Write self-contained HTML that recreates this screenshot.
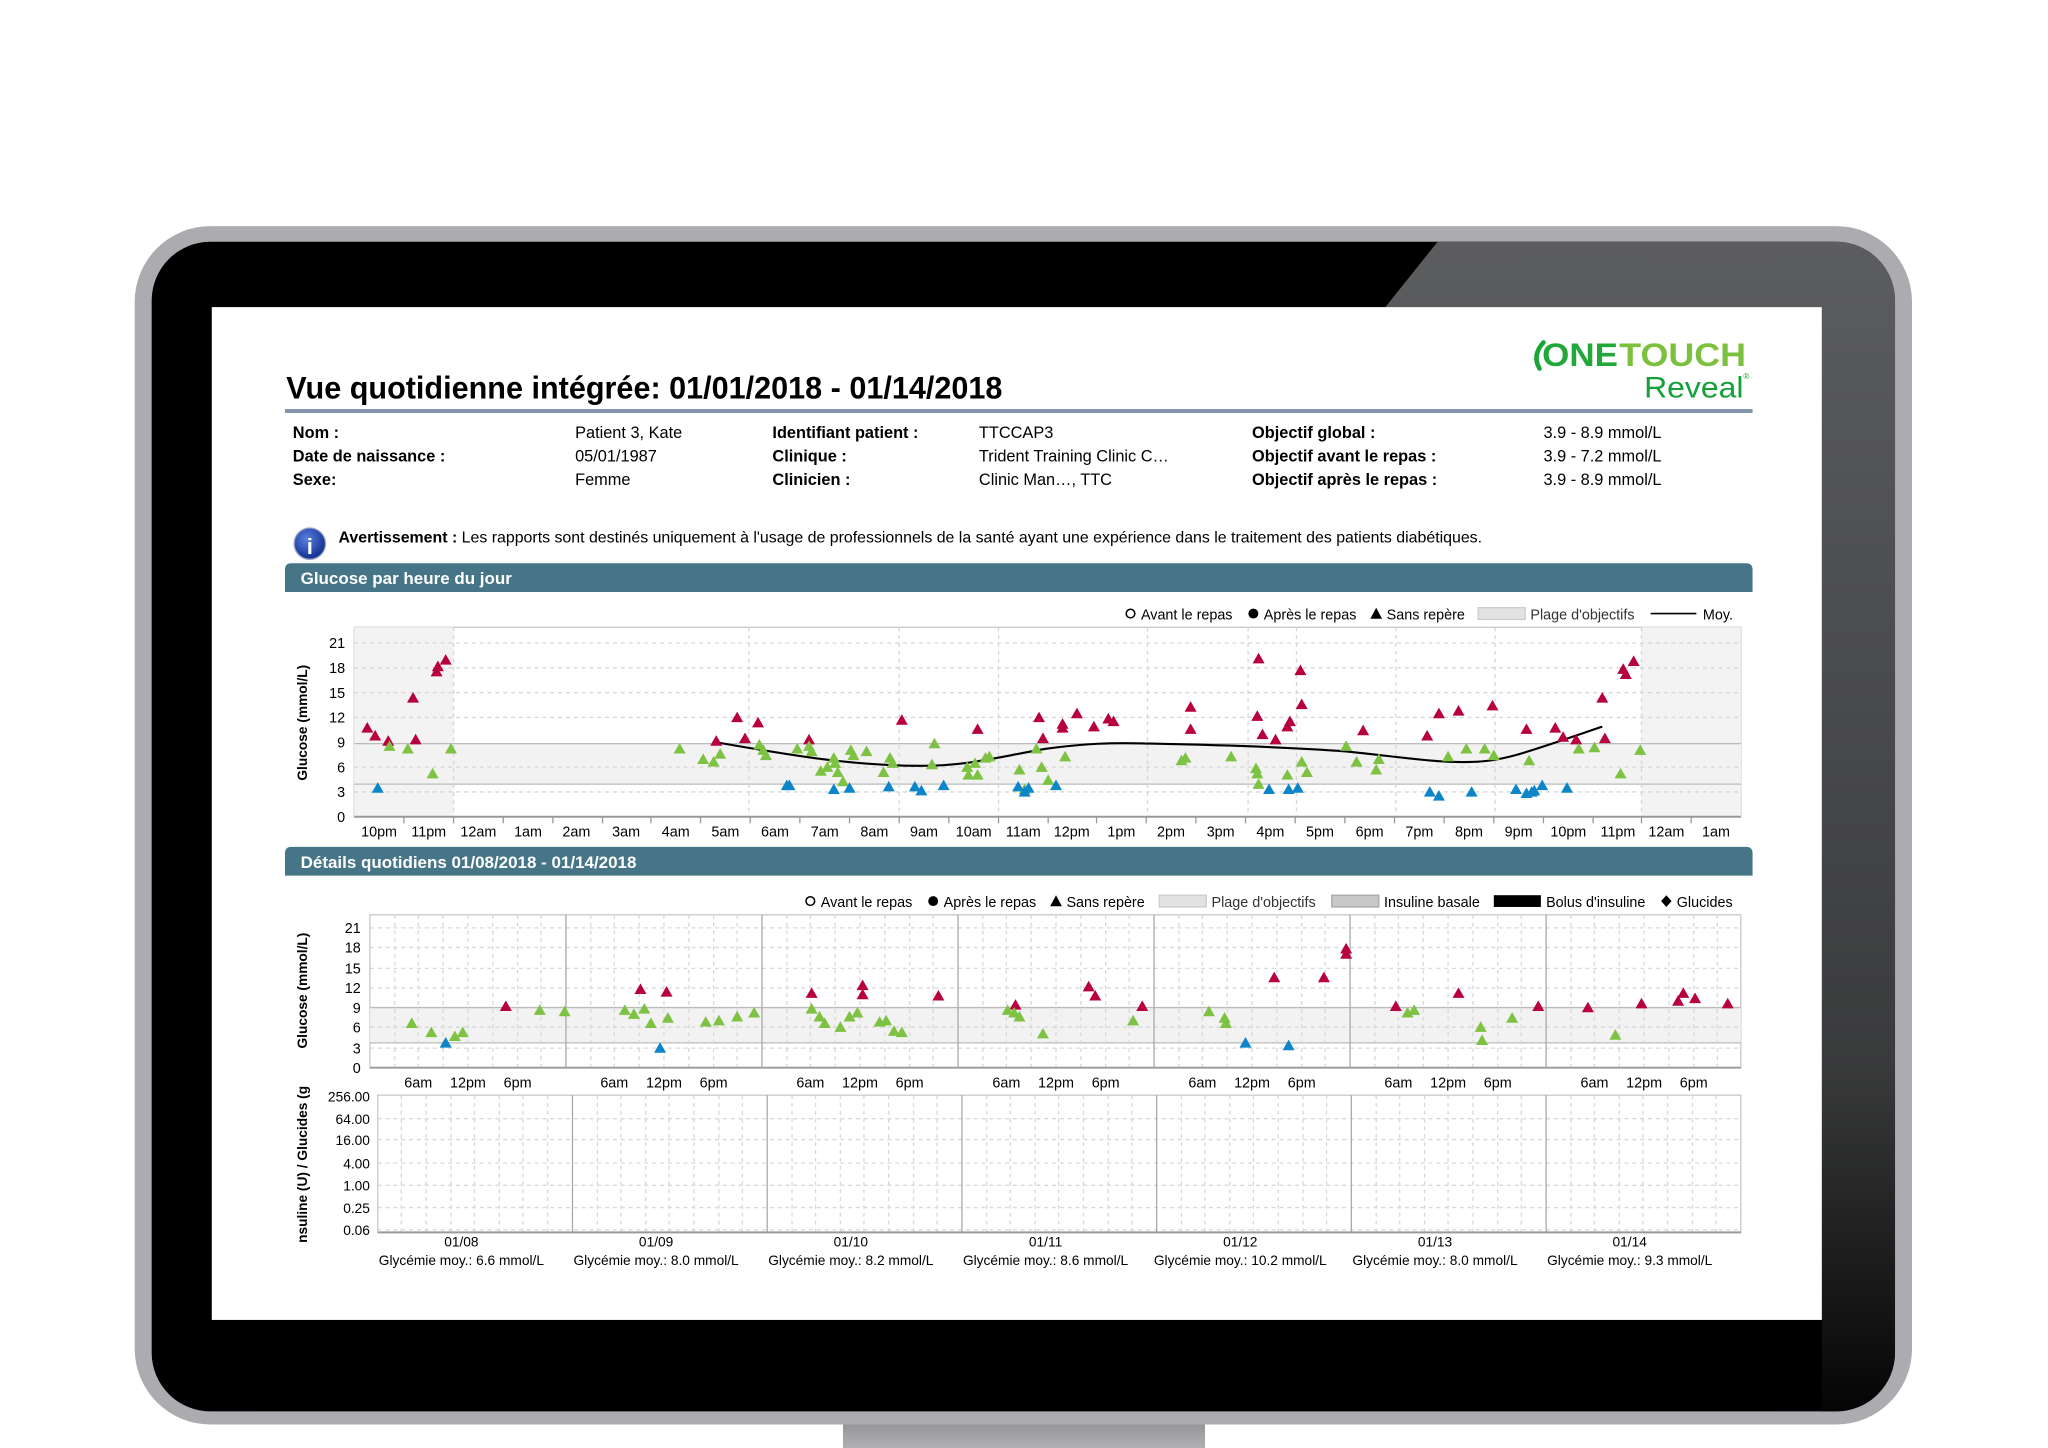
<!DOCTYPE html>
<html><head><meta charset="utf-8"><style>
html,body{margin:0;padding:0;background:#fff;width:2048px;height:1448px;overflow:hidden}
svg{display:block}
text{font-family:"Liberation Sans",Arial,sans-serif}
</style></head><body>
<svg width="2048" height="1448" viewBox="0 0 1567 1108" xmlns="http://www.w3.org/2000/svg">
<defs>
<linearGradient id="gl" x1="0" y1="0" x2="0" y2="1"><stop offset="0" stop-color="#5c5d5f"/><stop offset="0.7" stop-color="#3a3b3c"/><stop offset="1" stop-color="#050505"/></linearGradient>
<linearGradient id="st" x1="0" y1="0" x2="0" y2="1"><stop offset="0" stop-color="#8e8e91"/><stop offset="1" stop-color="#b0b0b3"/></linearGradient>
<clipPath id="inner"><rect x="116" y="185" width="1334" height="895" rx="45"/></clipPath>
<path id="tr" d="M0,-4.5 L4.6,3.6 L-4.6,3.6 Z"/>
<radialGradient id="ig" cx="0.4" cy="0.35" r="0.7"><stop offset="0" stop-color="#5a7fe0"/><stop offset="1" stop-color="#0c2a8a"/></radialGradient>
</defs>
<rect x="645" y="1085" width="277" height="23" fill="url(#st)"/>
<rect x="103" y="173" width="1360" height="917" rx="58" fill="#acabb0"/>
<rect x="116" y="185" width="1334" height="895" rx="45" fill="#000"/>
<g clip-path="url(#inner)"><polygon points="1100,185 1460,185 1460,1080 1394,1080 1394,235 1060,235" fill="url(#gl)"/></g>
<rect x="162" y="235" width="1232" height="775" fill="#fff"/>

<text x="219" y="305" font-size="24" font-weight="bold" fill="#000" textLength="548" lengthAdjust="spacingAndGlyphs">Vue quotidienne intégrée: 01/01/2018 - 01/14/2018</text>
<path d="M1181,262 Q1172,272 1178,282" stroke="#1aa538" stroke-width="3.5" fill="none" stroke-linecap="round"/>
<text x="1180" y="280" font-size="25" font-weight="bold" fill="#22a83a" textLength="58" lengthAdjust="spacingAndGlyphs">ONE</text>
<text x="1239" y="280" font-size="25" font-weight="bold" fill="#7cc13e" textLength="97" lengthAdjust="spacingAndGlyphs">TOUCH</text>
<text x="1258" y="304" font-size="23" fill="#15a13a" textLength="76" lengthAdjust="spacingAndGlyphs">Reveal</text>
<text x="1334" y="290" font-size="6" fill="#15a13a">®</text>
<rect x="218" y="313" width="1123" height="3" fill="#8294a8"/>

<g font-size="12.5" fill="#000">
<text x="224" y="335" font-weight="bold">Nom :</text>
<text x="224" y="353" font-weight="bold">Date de naissance :</text>
<text x="224" y="371" font-weight="bold">Sexe:</text>
<text x="440" y="335">Patient 3, Kate</text>
<text x="440" y="353">05/01/1987</text>
<text x="440" y="371">Femme</text>
<text x="591" y="335" font-weight="bold">Identifiant patient :</text>
<text x="591" y="353" font-weight="bold">Clinique :</text>
<text x="591" y="371" font-weight="bold">Clinicien :</text>
<text x="749" y="335">TTCCAP3</text>
<text x="749" y="353">Trident Training Clinic C…</text>
<text x="749" y="371">Clinic Man…, TTC</text>
<text x="958" y="335" font-weight="bold">Objectif global :</text>
<text x="958" y="353" font-weight="bold">Objectif avant le repas :</text>
<text x="958" y="371" font-weight="bold">Objectif après le repas :</text>
<text x="1181" y="335">3.9 - 8.9 mmol/L</text>
<text x="1181" y="353">3.9 - 7.2 mmol/L</text>
<text x="1181" y="371">3.9 - 8.9 mmol/L</text>
</g>
<circle cx="237" cy="416" r="12" fill="url(#ig)" stroke="#9aa3c4" stroke-width="1"/>
<text x="237" y="424" font-size="17" font-weight="bold" fill="#fff" text-anchor="middle" font-family="Liberation Serif">i</text>
<text x="259" y="415" font-size="12" fill="#000" textLength="875" lengthAdjust="spacingAndGlyphs"><tspan font-weight="bold">Avertissement :</tspan> Les rapports sont destinés uniquement à l'usage de professionnels de la santé ayant une expérience dans le traitement des patients diabétiques.</text>

<path d="M218,436 Q218,431 223,431 L1336,431 Q1341,431 1341,436 L1341,453 L218,453 Z" fill="#457587"/>
<text x="230" y="447" font-size="13" font-weight="bold" fill="#fff">Glucose par heure du jour</text>
<g font-size="11" fill="#000">
<circle cx="865" cy="469.5" r="3.3" fill="none" stroke="#000" stroke-width="1.2"/><text x="873" y="474">Avant le repas</text>
<circle cx="959" cy="469.5" r="3.8"/><text x="967" y="474">Après le repas</text>
<path d="M1053,465 L1057.5,473.5 L1048.5,473.5Z"/><text x="1061" y="474">Sans repère</text>
<rect x="1131" y="465" width="36" height="9" fill="#e2e2e2" stroke="#ccc"/><text x="1171" y="474" fill="#333">Plage d'objectifs</text>
<line x1="1263" y1="469.5" x2="1298" y2="469.5" stroke="#000" stroke-width="1.3"/><text x="1303" y="474">Moy.</text>
</g>
<rect x="271" y="480" width="1061" height="145" fill="#fff" stroke="#c8c8c8"/>
<rect x="271" y="480" width="76" height="145" fill="#f3f3f3"/>
<rect x="1256" y="480" width="76" height="145" fill="#f3f3f3"/>
<rect x="271" y="569" width="1061" height="31" fill="#f2f2f2"/>
<line x1="271" y1="569" x2="1332" y2="569" stroke="#bbb"/><line x1="271" y1="600" x2="1332" y2="600" stroke="#bbb"/>
<g stroke="#d6d6d6" stroke-dasharray="3,3">
<line x1="271" y1="492" x2="1332" y2="492"/><line x1="271" y1="511" x2="1332" y2="511"/><line x1="271" y1="530" x2="1332" y2="530"/><line x1="271" y1="549" x2="1332" y2="549"/><line x1="271" y1="587" x2="1332" y2="587"/><line x1="271" y1="606" x2="1332" y2="606"/>
<line x1="347" y1="480" x2="347" y2="625"/><line x1="573" y1="480" x2="573" y2="625"/><line x1="688" y1="480" x2="688" y2="625"/><line x1="764" y1="480" x2="764" y2="625"/><line x1="878" y1="480" x2="878" y2="625"/><line x1="955" y1="480" x2="955" y2="625"/><line x1="992" y1="480" x2="992" y2="625"/><line x1="1068" y1="480" x2="1068" y2="625"/><line x1="1144" y1="480" x2="1144" y2="625"/><line x1="1256" y1="480" x2="1256" y2="625"/>
</g>
<line x1="271" y1="625" x2="1332" y2="625" stroke="#999" stroke-width="1.5"/>
<g font-size="11" fill="#000" text-anchor="end">
<text x="264" y="496">21</text><text x="264" y="515">18</text><text x="264" y="534">15</text><text x="264" y="553">12</text><text x="264" y="572">9</text><text x="264" y="591">6</text><text x="264" y="610">3</text><text x="264" y="629">0</text>
</g>
<text transform="translate(235,553) rotate(-90)" font-size="10.5" font-weight="bold" text-anchor="middle">Glucose (mmol/L)</text>
<g font-size="11" fill="#000" text-anchor="middle">
<text x="290" y="640">10pm</text><text x="328" y="640">11pm</text><text x="366" y="640">12am</text><text x="404" y="640">1am</text><text x="441" y="640">2am</text><text x="479" y="640">3am</text><text x="517" y="640">4am</text><text x="555" y="640">5am</text><text x="593" y="640">6am</text><text x="631" y="640">7am</text><text x="669" y="640">8am</text><text x="707" y="640">9am</text><text x="745" y="640">10am</text><text x="783" y="640">11am</text><text x="820" y="640">12pm</text><text x="858" y="640">1pm</text><text x="896" y="640">2pm</text><text x="934" y="640">3pm</text><text x="972" y="640">4pm</text><text x="1010" y="640">5pm</text><text x="1048" y="640">6pm</text><text x="1086" y="640">7pm</text><text x="1124" y="640">8pm</text><text x="1162" y="640">9pm</text><text x="1200" y="640">10pm</text><text x="1238" y="640">11pm</text><text x="1275" y="640">12am</text><text x="1313" y="640">1am</text>
</g>
<g stroke="#999">
<line x1="309" y1="625" x2="309" y2="630"/><line x1="347" y1="625" x2="347" y2="630"/><line x1="385" y1="625" x2="385" y2="630"/><line x1="423" y1="625" x2="423" y2="630"/><line x1="461" y1="625" x2="461" y2="630"/><line x1="498" y1="625" x2="498" y2="630"/><line x1="536" y1="625" x2="536" y2="630"/><line x1="574" y1="625" x2="574" y2="630"/><line x1="612" y1="625" x2="612" y2="630"/><line x1="650" y1="625" x2="650" y2="630"/><line x1="688" y1="625" x2="688" y2="630"/><line x1="726" y1="625" x2="726" y2="630"/><line x1="764" y1="625" x2="764" y2="630"/><line x1="802" y1="625" x2="802" y2="630"/><line x1="839" y1="625" x2="839" y2="630"/><line x1="877" y1="625" x2="877" y2="630"/><line x1="915" y1="625" x2="915" y2="630"/><line x1="953" y1="625" x2="953" y2="630"/><line x1="991" y1="625" x2="991" y2="630"/><line x1="1029" y1="625" x2="1029" y2="630"/><line x1="1067" y1="625" x2="1067" y2="630"/><line x1="1105" y1="625" x2="1105" y2="630"/><line x1="1143" y1="625" x2="1143" y2="630"/><line x1="1181" y1="625" x2="1181" y2="630"/><line x1="1219" y1="625" x2="1219" y2="630"/><line x1="1256" y1="625" x2="1256" y2="630"/><line x1="1294" y1="625" x2="1294" y2="630"/>
</g>
<path d="M548,568 C600,577 650,586 705,586 C740,586 760,580 800,573 C830,569 850,568 880,569 C930,570 990,572 1030,575 C1070,579 1100,584 1125,583 C1150,583 1170,575 1226,556" fill="none" stroke="#000" stroke-width="1.6"/>
<g fill="#b8003f">
<use href="#tr" x="281" y="557"/><use href="#tr" x="287" y="563"/><use href="#tr" x="297" y="567"/><use href="#tr" x="318" y="566"/><use href="#tr" x="316" y="534"/><use href="#tr" x="334" y="514"/><use href="#tr" x="335" y="510"/><use href="#tr" x="341" y="505"/><use href="#tr" x="548" y="567"/><use href="#tr" x="564" y="549"/><use href="#tr" x="570" y="565"/><use href="#tr" x="580" y="553"/><use href="#tr" x="619" y="566"/><use href="#tr" x="690" y="551"/><use href="#tr" x="748" y="558"/><use href="#tr" x="795" y="549"/><use href="#tr" x="798" y="565"/><use href="#tr" x="813" y="554"/><use href="#tr" x="813" y="557"/><use href="#tr" x="824" y="546"/><use href="#tr" x="837" y="556"/><use href="#tr" x="848" y="550"/><use href="#tr" x="852" y="552"/><use href="#tr" x="911" y="541"/><use href="#tr" x="911" y="558"/><use href="#tr" x="963" y="504"/><use href="#tr" x="962" y="548"/><use href="#tr" x="966" y="562"/><use href="#tr" x="976" y="566"/><use href="#tr" x="985" y="556"/><use href="#tr" x="987" y="552"/><use href="#tr" x="995" y="513"/><use href="#tr" x="996" y="539"/><use href="#tr" x="1043" y="559"/><use href="#tr" x="1092" y="563"/><use href="#tr" x="1101" y="546"/><use href="#tr" x="1116" y="544"/><use href="#tr" x="1142" y="540"/><use href="#tr" x="1168" y="558"/><use href="#tr" x="1190" y="557"/><use href="#tr" x="1196" y="564"/><use href="#tr" x="1206" y="566"/><use href="#tr" x="1228" y="565"/><use href="#tr" x="1226" y="534"/><use href="#tr" x="1242" y="512"/><use href="#tr" x="1244" y="516"/><use href="#tr" x="1250" y="506"/>
</g>
<g fill="#7dc242">
<use href="#tr" x="298" y="571"/><use href="#tr" x="312" y="573"/><use href="#tr" x="331" y="592"/><use href="#tr" x="345" y="573"/><use href="#tr" x="520" y="573"/><use href="#tr" x="538" y="581"/><use href="#tr" x="546" y="583"/><use href="#tr" x="551" y="577"/><use href="#tr" x="581" y="570"/><use href="#tr" x="584" y="574"/><use href="#tr" x="586" y="578"/><use href="#tr" x="610" y="573"/><use href="#tr" x="619" y="571"/><use href="#tr" x="621" y="575"/><use href="#tr" x="628" y="590"/><use href="#tr" x="633" y="587"/><use href="#tr" x="638" y="580"/><use href="#tr" x="639" y="584"/><use href="#tr" x="641" y="591"/><use href="#tr" x="645" y="598"/><use href="#tr" x="651" y="574"/><use href="#tr" x="653" y="578"/><use href="#tr" x="663" y="575"/><use href="#tr" x="676" y="591"/><use href="#tr" x="681" y="580"/><use href="#tr" x="683" y="584"/><use href="#tr" x="713" y="585"/><use href="#tr" x="715" y="569"/><use href="#tr" x="740" y="587"/><use href="#tr" x="741" y="593"/><use href="#tr" x="746" y="584"/><use href="#tr" x="748" y="593"/><use href="#tr" x="754" y="580"/><use href="#tr" x="757" y="579"/><use href="#tr" x="780" y="589"/><use href="#tr" x="784" y="604"/><use href="#tr" x="793" y="573"/><use href="#tr" x="797" y="587"/><use href="#tr" x="802" y="597"/><use href="#tr" x="815" y="579"/><use href="#tr" x="904" y="582"/><use href="#tr" x="907" y="580"/><use href="#tr" x="942" y="579"/><use href="#tr" x="961" y="588"/><use href="#tr" x="962" y="592"/><use href="#tr" x="963" y="600"/><use href="#tr" x="985" y="593"/><use href="#tr" x="996" y="583"/><use href="#tr" x="1000" y="591"/><use href="#tr" x="1030" y="571"/><use href="#tr" x="1038" y="583"/><use href="#tr" x="1053" y="589"/><use href="#tr" x="1055" y="581"/><use href="#tr" x="1108" y="579"/><use href="#tr" x="1122" y="573"/><use href="#tr" x="1136" y="573"/><use href="#tr" x="1143" y="578"/><use href="#tr" x="1170" y="582"/><use href="#tr" x="1208" y="573"/><use href="#tr" x="1220" y="572"/><use href="#tr" x="1240" y="592"/><use href="#tr" x="1255" y="574"/>
</g>
<g fill="#0d86c9">
<use href="#tr" x="289" y="603"/><use href="#tr" x="602" y="601"/><use href="#tr" x="604" y="601"/><use href="#tr" x="638" y="604"/><use href="#tr" x="650" y="603"/><use href="#tr" x="680" y="602"/><use href="#tr" x="700" y="602"/><use href="#tr" x="705" y="605"/><use href="#tr" x="722" y="601"/><use href="#tr" x="779" y="602"/><use href="#tr" x="784" y="606"/><use href="#tr" x="787" y="603"/><use href="#tr" x="808" y="601"/><use href="#tr" x="971" y="604"/><use href="#tr" x="986" y="604"/><use href="#tr" x="993" y="603"/><use href="#tr" x="1094" y="606"/><use href="#tr" x="1101" y="609"/><use href="#tr" x="1126" y="606"/><use href="#tr" x="1160" y="604"/><use href="#tr" x="1168" y="607"/><use href="#tr" x="1172" y="606"/><use href="#tr" x="1174" y="605"/><use href="#tr" x="1180" y="601"/><use href="#tr" x="1199" y="603"/>
</g>

<path d="M218,653 Q218,648 223,648 L1336,648 Q1341,648 1341,653 L1341,670 L218,670 Z" fill="#457587"/>
<text x="230" y="664" font-size="13" font-weight="bold" fill="#fff">Détails quotidiens 01/08/2018 - 01/14/2018</text>
<g font-size="11" fill="#000">
<circle cx="620" cy="689.5" r="3.3" fill="none" stroke="#000" stroke-width="1.2"/><text x="628" y="694">Avant le repas</text>
<circle cx="714" cy="689.5" r="3.8"/><text x="722" y="694">Après le repas</text>
<path d="M808,685 L812.5,693.5 L803.5,693.5Z"/><text x="816" y="694">Sans repère</text>
<rect x="887" y="685" width="36" height="9" fill="#e2e2e2" stroke="#ccc"/><text x="927" y="694" fill="#333">Plage d'objectifs</text>
<rect x="1019" y="685" width="36" height="9" fill="#c8c8c8" stroke="#aaa"/><text x="1059" y="694">Insuline basale</text>
<rect x="1143" y="685" width="36" height="9" fill="#000"/><text x="1183" y="694">Bolus d'insuline</text>
<path d="M1275,685 L1279,689.5 L1275,694 L1271,689.5Z"/><text x="1283" y="694">Glucides</text>
</g>
<rect x="283" y="700" width="1049" height="117" fill="#fff" stroke="#c8c8c8"/>
<rect x="283" y="771" width="1049" height="27" fill="#f2f2f2"/>
<line x1="283" y1="771" x2="1332" y2="771" stroke="#bbb"/><line x1="283" y1="798" x2="1332" y2="798" stroke="#bbb"/>
<g stroke="#d8d8d8" stroke-dasharray="3,3">
<line x1="283" y1="710" x2="1332" y2="710"/><line x1="283" y1="725" x2="1332" y2="725"/><line x1="283" y1="741" x2="1332" y2="741"/><line x1="283" y1="756" x2="1332" y2="756"/><line x1="283" y1="786" x2="1332" y2="786"/><line x1="283" y1="802" x2="1332" y2="802"/>
<path d="M302,700V817M320,700V817M339,700V817M358,700V817M377,700V817M396,700V817M414,700V817M452,700V817M470,700V817M489,700V817M508,700V817M527,700V817M546,700V817M564,700V817M602,700V817M620,700V817M639,700V817M658,700V817M677,700V817M696,700V817M714,700V817M752,700V817M770,700V817M789,700V817M808,700V817M827,700V817M846,700V817M864,700V817M902,700V817M920,700V817M939,700V817M958,700V817M977,700V817M996,700V817M1014,700V817M1052,700V817M1070,700V817M1089,700V817M1108,700V817M1127,700V817M1146,700V817M1164,700V817M1202,700V817M1220,700V817M1239,700V817M1258,700V817M1277,700V817M1296,700V817M1314,700V817"/>
</g>
<g stroke="#aaa"><path d="M433,700V817M583,700V817M733,700V817M883,700V817M1033,700V817M1183,700V817"/></g>
<line x1="283" y1="817" x2="1332" y2="817" stroke="#999" stroke-width="1.5"/>
<g font-size="11" fill="#000" text-anchor="end">
<text x="276" y="714">21</text><text x="276" y="729">18</text><text x="276" y="745">15</text><text x="276" y="760">12</text><text x="276" y="775">9</text><text x="276" y="790">6</text><text x="276" y="806">3</text><text x="276" y="821">0</text>
</g>
<text transform="translate(235,758) rotate(-90)" font-size="10.5" font-weight="bold" text-anchor="middle">Glucose (mmol/L)</text>
<g font-size="11" fill="#000" text-anchor="middle">
<text x="320" y="832">6am</text><text x="358" y="832">12pm</text><text x="396" y="832">6pm</text>
<text x="470" y="832">6am</text><text x="508" y="832">12pm</text><text x="546" y="832">6pm</text>
<text x="620" y="832">6am</text><text x="658" y="832">12pm</text><text x="696" y="832">6pm</text>
<text x="770" y="832">6am</text><text x="808" y="832">12pm</text><text x="846" y="832">6pm</text>
<text x="920" y="832">6am</text><text x="958" y="832">12pm</text><text x="996" y="832">6pm</text>
<text x="1070" y="832">6am</text><text x="1108" y="832">12pm</text><text x="1146" y="832">6pm</text>
<text x="1220" y="832">6am</text><text x="1258" y="832">12pm</text><text x="1296" y="832">6pm</text>
</g>
<g fill="#b8003f">
<use href="#tr" x="387" y="770"/><use href="#tr" x="490" y="757"/><use href="#tr" x="510" y="759"/><use href="#tr" x="621" y="760"/><use href="#tr" x="660" y="754"/><use href="#tr" x="660" y="761"/><use href="#tr" x="718" y="762"/><use href="#tr" x="777" y="769"/><use href="#tr" x="833" y="755"/><use href="#tr" x="838" y="762"/><use href="#tr" x="874" y="770"/><use href="#tr" x="975" y="748"/><use href="#tr" x="1013" y="748"/><use href="#tr" x="1030" y="726"/><use href="#tr" x="1030" y="730"/><use href="#tr" x="1068" y="770"/><use href="#tr" x="1116" y="760"/><use href="#tr" x="1177" y="770"/><use href="#tr" x="1215" y="771"/><use href="#tr" x="1256" y="768"/><use href="#tr" x="1284" y="766"/><use href="#tr" x="1288" y="760"/><use href="#tr" x="1297" y="764"/><use href="#tr" x="1322" y="768"/>
</g>
<g fill="#7dc242">
<use href="#tr" x="315" y="783"/><use href="#tr" x="330" y="790"/><use href="#tr" x="348" y="793"/><use href="#tr" x="354" y="790"/><use href="#tr" x="413" y="773"/><use href="#tr" x="432" y="774"/><use href="#tr" x="478" y="773"/><use href="#tr" x="485" y="776"/><use href="#tr" x="493" y="772"/><use href="#tr" x="498" y="783"/><use href="#tr" x="511" y="779"/><use href="#tr" x="540" y="782"/><use href="#tr" x="550" y="781"/><use href="#tr" x="564" y="778"/><use href="#tr" x="577" y="775"/><use href="#tr" x="621" y="772"/><use href="#tr" x="627" y="778"/><use href="#tr" x="631" y="783"/><use href="#tr" x="643" y="786"/><use href="#tr" x="650" y="778"/><use href="#tr" x="656" y="775"/><use href="#tr" x="673" y="782"/><use href="#tr" x="678" y="781"/><use href="#tr" x="684" y="789"/><use href="#tr" x="690" y="790"/><use href="#tr" x="771" y="773"/><use href="#tr" x="776" y="775"/><use href="#tr" x="780" y="778"/><use href="#tr" x="798" y="791"/><use href="#tr" x="867" y="781"/><use href="#tr" x="925" y="774"/><use href="#tr" x="937" y="779"/><use href="#tr" x="938" y="783"/><use href="#tr" x="1077" y="775"/><use href="#tr" x="1082" y="773"/><use href="#tr" x="1133" y="786"/><use href="#tr" x="1134" y="796"/><use href="#tr" x="1157" y="779"/><use href="#tr" x="1236" y="792"/>
</g>
<g fill="#0d86c9">
<use href="#tr" x="341" y="798"/><use href="#tr" x="505" y="802"/><use href="#tr" x="953" y="798"/><use href="#tr" x="986" y="800"/>
</g>

<rect x="289" y="838" width="1043" height="105" fill="#fff" stroke="#c8c8c8"/>
<g stroke="#d8d8d8" stroke-dasharray="3,3">
<line x1="289" y1="856" x2="1332" y2="856"/><line x1="289" y1="872" x2="1332" y2="872"/><line x1="289" y1="890" x2="1332" y2="890"/><line x1="289" y1="907" x2="1332" y2="907"/><line x1="289" y1="924" x2="1332" y2="924"/><line x1="289" y1="941" x2="1332" y2="941"/>
<path d="M307,838V943M326,838V943M345,838V943M363,838V943M382,838V943M400,838V943M419,838V943M457,838V943M475,838V943M494,838V943M512,838V943M531,838V943M550,838V943M568,838V943M606,838V943M624,838V943M643,838V943M661,838V943M680,838V943M699,838V943M717,838V943M755,838V943M773,838V943M792,838V943M810,838V943M829,838V943M848,838V943M866,838V943M904,838V943M922,838V943M941,838V943M959,838V943M978,838V943M997,838V943M1015,838V943M1053,838V943M1071,838V943M1090,838V943M1108,838V943M1127,838V943M1146,838V943M1164,838V943M1202,838V943M1220,838V943M1239,838V943M1257,838V943M1276,838V943M1295,838V943M1313,838V943"/>
</g>
<g stroke="#aaa"><path d="M438,838V943M587,838V943M736,838V943M885,838V943M1034,838V943M1183,838V943"/></g>
<line x1="289" y1="943" x2="1332" y2="943" stroke="#999" stroke-width="1.5"/>
<g font-size="10.5" fill="#000" text-anchor="end">
<text x="283" y="843">256.00</text><text x="283" y="860">64.00</text><text x="283" y="876">16.00</text><text x="283" y="894">4.00</text><text x="283" y="911">1.00</text><text x="283" y="928">0.25</text><text x="283" y="945">0.06</text>
</g>
<text transform="translate(235,891) rotate(-90)" font-size="10.5" font-weight="bold" text-anchor="middle">nsuline (U) / Glucides (g</text>
<g font-size="10.5" fill="#000" text-anchor="middle">
<text x="353" y="954">01/08</text><text x="502" y="954">01/09</text><text x="651" y="954">01/10</text><text x="800" y="954">01/11</text><text x="949" y="954">01/12</text><text x="1098" y="954">01/13</text><text x="1247" y="954">01/14</text>
<text x="353" y="968">Glycémie moy.: 6.6 mmol/L</text><text x="502" y="968">Glycémie moy.: 8.0 mmol/L</text><text x="651" y="968">Glycémie moy.: 8.2 mmol/L</text><text x="800" y="968">Glycémie moy.: 8.6 mmol/L</text><text x="949" y="968">Glycémie moy.: 10.2 mmol/L</text><text x="1098" y="968">Glycémie moy.: 8.0 mmol/L</text><text x="1247" y="968">Glycémie moy.: 9.3 mmol/L</text>
</g>
</svg>
</body></html>
